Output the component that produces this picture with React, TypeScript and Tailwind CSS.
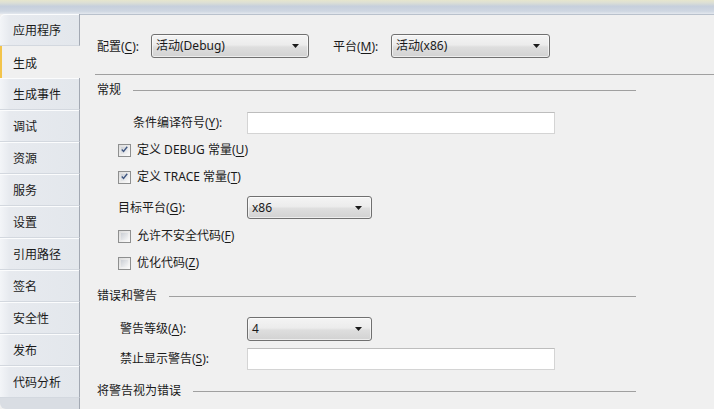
import React from 'react';

// --- Project properties: Build page ---

const TABS = [
  '应用程序', '生成', '生成事件', '调试', '资源', '服务',
  '设置', '引用路径', '签名', '安全性', '发布', '代码分析',
];

function Key({ k }: { k: string }) {
  return <span className="underline underline-offset-2">{k}</span>;
}

function Combo({ text, width }: { text: string; width: string }) {
  return (
    <div
      className={`${width} h-full rounded-[3px] border border-[#707070] bg-[linear-gradient(to_bottom,#f4f4f4_0%,#ececec_45%,#dedede_55%,#d2d2d2_100%)] flex items-center justify-between pl-[4px] pr-[9px] shadow-[inset_0_0_0_1px_rgba(255,255,255,0.6)]`}
    >
      <span>{text}</span>
      <svg width="7" height="4" viewBox="0 0 7 4">
        <path d="M0 0h7L3.5 4z" fill="#1a1a1a" />
      </svg>
    </div>
  );
}

function TextBox() {
  return <div className="w-[308px] h-full bg-white border border-[#d4d4d4] border-t-[#bdbdbd]" />;
}

function Check({ checked }: { checked: boolean }) {
  return (
    <div className="w-[13px] h-[13px] border border-[#8e8f8f] bg-[linear-gradient(135deg,#dcdcdc,#fbfbfb)] p-[2px] shrink-0">
      <div className="w-full h-full bg-[linear-gradient(135deg,#cbcfd5,#f6f6f6)] flex items-center justify-center">
        {checked && (
          <svg width="9" height="9" viewBox="0 0 9 9" className="-mt-[1px]">
            <path d="M1 4.5l2.3 2.6L8 1" stroke="#3f5680" strokeWidth="1.7" fill="none" />
          </svg>
        )}
      </div>
    </div>
  );
}

function Section({ title, mt }: { title: string; mt: string }) {
  return (
    <div className={`${mt} h-[16px] flex items-center w-[539px]`}>
      <span>{title}</span>
      <div className="flex-1 ml-[12px] h-px bg-[#a0a0a0]" />
    </div>
  );
}

export default function App() {
  return (
    <div className="w-[714px] h-[409px] overflow-hidden bg-[#f0f0f0] text-[12px] leading-none text-[#1a1a1a] font-['Segoe_UI','Noto_Sans','Noto_Sans_CJK_SC',sans-serif] flex flex-col">
      {/* window chrome band */}
      <div className="h-[14px] shrink-0 bg-[linear-gradient(to_bottom,#e6e6cd_0%,#dcdfd6_20%,#c6cfdc_45%,#cfd7e2_80%,#e4e8ee_100%)]" />

      <div className="flex flex-1 min-h-0">
        {/* side tabs */}
        <div className="w-[80px] shrink-0 flex flex-col">
          {TABS.map((t, i) => {
            const active = t === '生成';
            return (
              <div
                key={t}
                className={
                  active
                    ? 'h-[32px] shrink-0 flex items-center pt-[3px] pl-[11px] bg-[#f0f0f0] border-l-[2px] border-[#f3c44a]'
                    : `h-[32px] shrink-0 flex items-center pt-[3px] pl-[13px] bg-[linear-gradient(to_right,#f3f5f8_0%,#e7eaef_12%,#e3e7ec_100%)] border-r border-r-[#a3a9b3] border-b border-b-[#d3d8df] shadow-[inset_0_1px_0_#fbfcfd] ${i === 0 ? 'rounded-tl-[5px]' : ''}`
                }
              >
                {t}
              </div>
            );
          })}
          <div className="flex-1 bg-[#d9dde3] border-r border-r-[#a3a9b3] rounded-bl-[6px]" />
        </div>

        {/* page */}
        <div className="flex-1 border-t border-t-[#b9c1cc] flex flex-col">
          <div className="mt-[19px] ml-[17px] h-[24px] flex items-center">
            <span className="w-[54px] pt-[2px]">配置(<Key k="C" />):</span>
            <Combo text="活动(Debug)" width="w-[158px]" />
            <span className="ml-[24px] w-[58px] pt-[2px]">平台(<Key k="M" />):</span>
            <Combo text="活动(x86)" width="w-[159px]" />
          </div>

          <div className="mt-[16px] ml-[15px] h-px bg-[#a0a0a0]" />

          <div className="ml-[17px]">
            <Section title="常规" mt="mt-[7px]" />

            <div className="mt-[14px] h-[22px] flex items-center">
              <span className="ml-[36px] w-[114px]">条件编译符号(<Key k="Y" />):</span>
              <TextBox />
            </div>

            <div className="mt-[7px] h-[18px] flex items-center gap-[6px] ml-[21px]">
              <Check checked />
              <span>定义 DEBUG 常量(<Key k="U" />)</span>
            </div>
            <div className="mt-[9px] h-[18px] flex items-center gap-[6px] ml-[21px]">
              <Check checked />
              <span>定义 TRACE 常量(<Key k="T" />)</span>
            </div>

            <div className="mt-[10px] h-[23px] flex items-center">
              <span className="ml-[21px] w-[129px]">目标平台(<Key k="G" />):</span>
              <Combo text="x86" width="w-[125px]" />
            </div>

            <div className="mt-[8px] h-[18px] flex items-center gap-[6px] ml-[21px]">
              <Check checked={false} />
              <span>允许不安全代码(<Key k="F" />)</span>
            </div>
            <div className="mt-[9px] h-[18px] flex items-center gap-[6px] ml-[21px]">
              <Check checked={false} />
              <span>优化代码(<Key k="Z" />)</span>
            </div>

            <Section title="错误和警告" mt="mt-[16px]" />

            <div className="mt-[13px] h-[24px] flex items-center">
              <span className="ml-[23px] w-[127px]">警告等级(<Key k="A" />):</span>
              <Combo text="4" width="w-[125px]" />
            </div>
            <div className="mt-[7px] h-[22px] flex items-center">
              <span className="ml-[23px] w-[127px]">禁止显示警告(<Key k="S" />):</span>
              <TextBox />
            </div>

            <Section title="将警告视为错误" mt="mt-[13px]" />
          </div>
        </div>
      </div>
    </div>
  );
}
